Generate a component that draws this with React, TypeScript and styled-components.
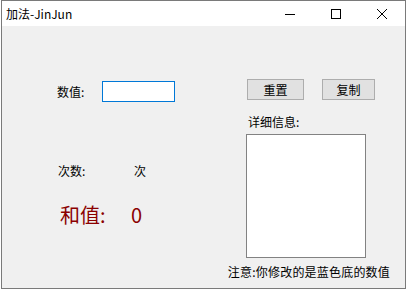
import React from "react";
import styled, { createGlobalStyle } from "styled-components";

const Global = createGlobalStyle`
  html, body { margin: 0; padding: 0; background: #ffffff; }
  body { font-family: "Noto Sans CJK SC", "Noto Sans", sans-serif; font-size: 12px; color: #000; }
`;

const Window = styled.div`
  margin-left: 1px;
  width: 405px;
  height: 289px;
  box-sizing: border-box;
  border: 1px solid #7a7a7a;
  display: flex;
  flex-direction: column;
  background: #f0f0f0;
`;

const TitleBar = styled.div`
  height: 25px;
  background: #ffffff;
  display: flex;
  align-items: center;
  flex-shrink: 0;
`;

const Title = styled.div`
  flex: 1;
  padding-left: 4px;
  font-size: 12px;
  line-height: 25px;
`;

const CaptionButton = styled.div`
  width: 46px;
  height: 25px;
  display: flex;
  align-items: center;
  justify-content: center;
`;

const Body = styled.div`
  flex: 1;
  display: grid;
  grid-template-columns: 244px 1fr;
  grid-template-rows: auto 1fr;
`;

const LeftCol = styled.div`
  padding-top: 55px;
  display: flex;
  flex-direction: column;
`;

const InputRow = styled.div`
  display: flex;
  align-items: center;
  height: 21px;
  padding-left: 55px;
`;

const Label = styled.span<{ $w?: number }>`
  display: inline-block;
  width: ${(p) => (p.$w ? `${p.$w}px` : "auto")};
  font-size: 12px;
  line-height: 14px;
  white-space: nowrap;
`;

const TextInput = styled.div`
  width: 73px;
  height: 21px;
  box-sizing: border-box;
  border: 1px solid #0078d7;
  background: #ffffff;
`;

const CountRow = styled.div`
  margin-top: 62px;
  padding-left: 56px;
  display: flex;
  line-height: 14px;
`;

const SumRow = styled.div`
  margin-top: 25px;
  padding-left: 58px;
  display: flex;
  color: #8b0000;
  font-size: 20px;
  line-height: 24px;
`;

const SumLabel = styled.span`
  width: 71px;
`;

const RightCol = styled.div`
  padding-top: 53px;
  display: flex;
  flex-direction: column;
  align-items: flex-start;
`;

const ButtonRow = styled.div`
  display: flex;
  gap: 18px;
  padding-left: 1px;
`;

const Button = styled.div<{ $w: number }>`
  width: ${(p) => p.$w}px;
  height: 21px;
  box-sizing: border-box;
  border: 1px solid #adadad;
  background: #e1e1e1;
  display: flex;
  align-items: center;
  justify-content: center;
  font-size: 12px;
`;

const DetailLabel = styled.div`
  margin-top: 15px;
  padding-left: 2px;
  line-height: 14px;
`;

const TextArea = styled.div`
  margin-top: 5px;
  width: 120px;
  height: 124px;
  box-sizing: border-box;
  border: 1px solid #828282;
  background: #ffffff;
`;

const Note = styled.div`
  grid-column: 1 / -1;
  justify-self: end;
  margin-top: 7px;
  padding-right: 15px;
  font-size: 12px;
  line-height: 14px;
  letter-spacing: 0.2px;
  white-space: nowrap;
`;

export default function App() {
  return (
    <>
      <Global />
      <Window>
        <TitleBar>
          <Title>加法-JinJun</Title>
          <CaptionButton>
            <svg width="10" height="10" viewBox="0 0 10 10">
              <line x1="0" y1="5.5" x2="10" y2="5.5" stroke="#000" strokeWidth="1" />
            </svg>
          </CaptionButton>
          <CaptionButton>
            <svg width="10" height="10" viewBox="0 0 10 10">
              <rect x="0.5" y="0.5" width="9" height="9" fill="none" stroke="#000" strokeWidth="1" />
            </svg>
          </CaptionButton>
          <CaptionButton>
            <svg width="10" height="10" viewBox="0 0 10 10">
              <path d="M0 0 L10 10 M10 0 L0 10" stroke="#000" strokeWidth="1" fill="none" />
            </svg>
          </CaptionButton>
        </TitleBar>
        <Body>
          <LeftCol>
            <InputRow>
              <Label $w={45}>数值:</Label>
              <TextInput />
            </InputRow>
            <CountRow>
              <Label $w={76}>次数:</Label>
              <Label>次</Label>
            </CountRow>
            <SumRow>
              <SumLabel>和值:</SumLabel>
              <span>0</span>
            </SumRow>
          </LeftCol>
          <RightCol>
            <ButtonRow>
              <Button $w={57}>重置</Button>
              <Button $w={53}>复制</Button>
            </ButtonRow>
            <DetailLabel>详细信息:</DetailLabel>
            <TextArea />
          </RightCol>
          <Note>注意:你修改的是蓝色底的数值</Note>
        </Body>
      </Window>
    </>
  );
}
